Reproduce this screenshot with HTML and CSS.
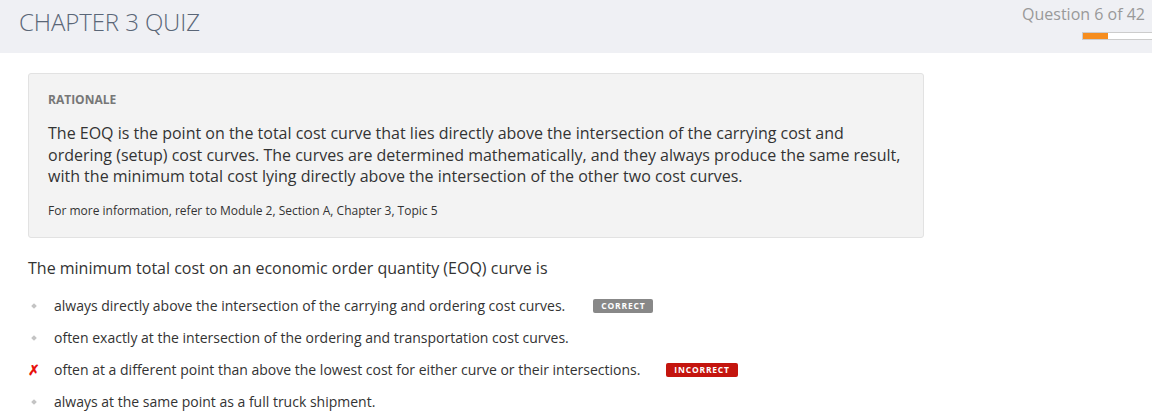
FILE: index.html
```html
<!DOCTYPE html>
<html>
<head>
<meta charset="utf-8">
<link rel="stylesheet" href="styles.css">
</head>
<body>
<header class="topbar">
  <h1 class="title">CHAPTER 3 QUIZ</h1>
  <div class="progress-wrap">
    <div class="progress-label">Question 6 of 42</div>
    <div class="progress"><div class="progress-fill" style="width:36%"></div></div>
  </div>
</header>
<main class="content">
  <section class="rationale">
    <div class="rationale-head">RATIONALE</div>
    <p class="rationale-body">The EOQ is the point on the total cost curve that lies directly above the intersection of the carrying cost and ordering (setup) cost curves. The curves are determined mathematically, and they always produce the same result, with the minimum total cost lying directly above the intersection of the other two cost curves.</p>
    <p class="rationale-ref">For more information, refer to Module 2, Section A, Chapter 3, Topic 5</p>
  </section>
  <p class="question">The minimum total cost on an economic order quantity (EOQ) curve is</p>
  <ul class="options">
    <li class="option"><span class="mark dot"></span><span class="opt-text">always directly above the intersection of the carrying and ordering cost curves.</span><span class="badge badge-correct">CORRECT</span></li>
    <li class="option"><span class="mark dot"></span><span class="opt-text">often exactly at the intersection of the ordering and transportation cost curves.</span></li>
    <li class="option"><span class="mark cross">✗</span><span class="opt-text">often at a different point than above the lowest cost for either curve or their intersections.</span><span class="badge badge-wrong">INCORRECT</span></li>
    <li class="option"><span class="mark dot"></span><span class="opt-text">always at the same point as a full truck shipment.</span></li>
  </ul>
</main>
</body>
</html>
```
FILE: styles.css
```css
* { box-sizing: border-box; }
html, body { margin: 0; padding: 0; background: #fff; }
body { font-family: "Open Sans", "Liberation Sans", sans-serif; color: #333; }

.topbar {
  height: 53px;
  background: #eff0f4;
  display: flex;
  justify-content: space-between;
  align-items: flex-start;
  padding: 0 0 0 19px;
}
.title {
  margin: 5px 0 0;
  font-size: 24px;
  font-weight: 300;
  color: #5a6677;
  letter-spacing: -0.1px;
}
.progress-wrap {
  display: flex;
  flex-direction: column;
  align-items: flex-end;
  padding-top: 3px;
}
.progress-label {
  font-size: 16px;
  color: #999;
  padding-right: 7px;
  line-height: 22px;
}
.progress {
  margin-top: 7px;
  width: 70px;
  height: 8px;
  background: #fff;
  border: 1px solid #ccc;
  border-right: none;
}
.progress-fill { height: 100%; background: #f68d1e; }

.content { padding: 20px 0 0 28px; }

.rationale {
  width: 896px;
  background: #f3f3f3;
  border: 1px solid #e2e2e2;
  border-radius: 3px;
  padding: 18px 19px 18px;
}
.rationale-head {
  font-size: 12px;
  font-weight: 700;
  color: #777;
  line-height: 16px;
}
.rationale-body {
  margin: 15px 0 0;
  font-size: 16px;
  line-height: 21.5px;
  color: #333;
}
.rationale-ref {
  margin: 15px 0 0;
  font-size: 12px;
  line-height: 16px;
  color: #333;
}

.question {
  margin: 19px 0 0;
  font-size: 16px;
  line-height: 22px;
  color: #333;
}
.options { list-style: none; margin: 11px 0 0; padding: 0; }
.option {
  display: flex;
  align-items: center;
  height: 32px;
  font-size: 14px;
  color: #333;
}
.mark { width: 26px; flex: none; display: flex; align-items: center; }
.dot::before {
  content: "";
  display: block;
  width: 4px;
  height: 4px;
  margin-left: 4px;
  background: #c4c4c4;
  transform: rotate(45deg);
}
.cross { color: #e8120c; font-size: 14px; font-weight: 700; }
.badge {
  margin-left: 28px;
  font-size: 8.5px;
  font-weight: 700;
  letter-spacing: 0.8px;
  color: #fff;
  border-radius: 2px;
  padding: 2px 8px;
  line-height: 10px;
}
.badge-correct { background: #888; }
.badge-wrong { background: #c4150e; margin-left: 26px; padding: 2px 8px; }
```
